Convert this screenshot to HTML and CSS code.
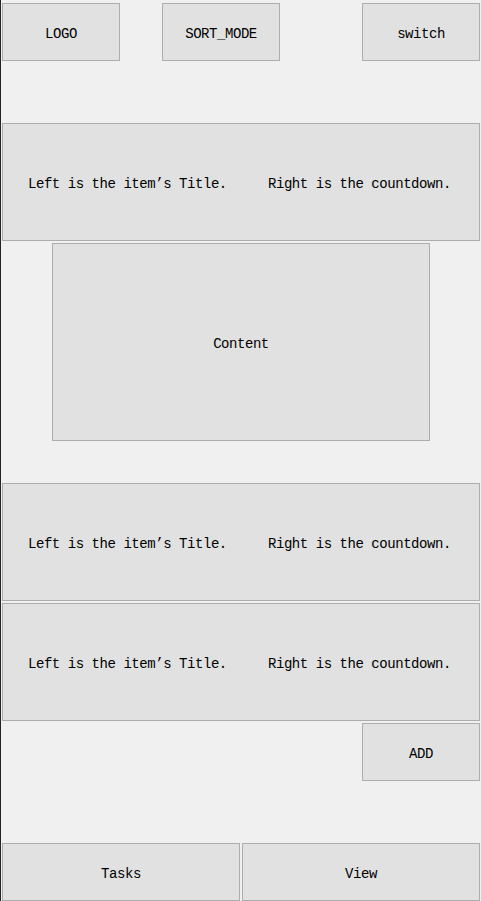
FILE: index.html
```html
<!DOCTYPE html>
<html>
<head>
<meta charset="utf-8">
<link rel="stylesheet" href="styles.css">
</head>
<body>
<div class="app">
  <div class="topbar">
    <div class="btn btn-logo">LOGO</div>
    <div class="btn btn-sort">SORT_MODE</div>
    <div class="btn btn-switch">switch</div>
  </div>
  <div class="item item-first">
    <span class="item-title">Left is the item’s Title.</span>
    <span class="item-count">Right is the countdown.</span>
  </div>
  <div class="content">Content</div>
  <div class="item item-after-content">
    <span class="item-title">Left is the item’s Title.</span>
    <span class="item-count">Right is the countdown.</span>
  </div>
  <div class="item item-next">
    <span class="item-title">Left is the item’s Title.</span>
    <span class="item-count">Right is the countdown.</span>
  </div>
  <div class="add-row">
    <div class="btn btn-add">ADD</div>
  </div>
  <div class="bottombar">
    <div class="btn btn-tab">Tasks</div>
    <div class="btn btn-tab">View</div>
  </div>
</div>
</body>
</html>
```
FILE: styles.css
```css
html, body {
  margin: 0;
  padding: 0;
  background: #f0f0f0;
}
body {
  width: 481px;
  height: 901px;
  overflow: hidden;
  font-family: "Liberation Mono", "DejaVu Sans Mono", monospace;
  font-size: 14px;
  letter-spacing: -0.45px;
  color: #000;
}
.app {
  box-sizing: border-box;
  width: 481px;
  height: 901px;
  border-left: 1px solid #242424;
  padding: 3px 1px 0 1px;
  display: flex;
  flex-direction: column;
}
.btn, .item, .content {
  box-sizing: border-box;
  background: #e1e1e1;
  border: 1px solid #adadad;
}
.btn {
  width: 118px;
  height: 58px;
  display: flex;
  align-items: center;
  justify-content: center;
  padding-top: 4px;
}
.topbar {
  display: flex;
  height: 58px;
}
.btn-sort {
  margin-left: 42px;
}
.btn-switch {
  margin-left: auto;
}
.item {
  height: 118px;
  display: grid;
  grid-template-columns: 240px auto;
  align-items: center;
  padding-left: 25px;
  padding-top: 4px;
}
.item-first {
  margin-top: 62px;
}
.content {
  margin-top: 2px;
  margin-left: 50px;
  width: 378px;
  height: 198px;
  display: flex;
  align-items: center;
  justify-content: center;
  padding-top: 4px;
}
.item-after-content {
  margin-top: 42px;
}
.item-next {
  margin-top: 2px;
}
.add-row {
  margin-top: 2px;
  display: flex;
  justify-content: flex-end;
}
.bottombar {
  margin-top: 62px;
  display: flex;
  gap: 2px;
}
.btn-tab {
  width: 238px;
}
```
